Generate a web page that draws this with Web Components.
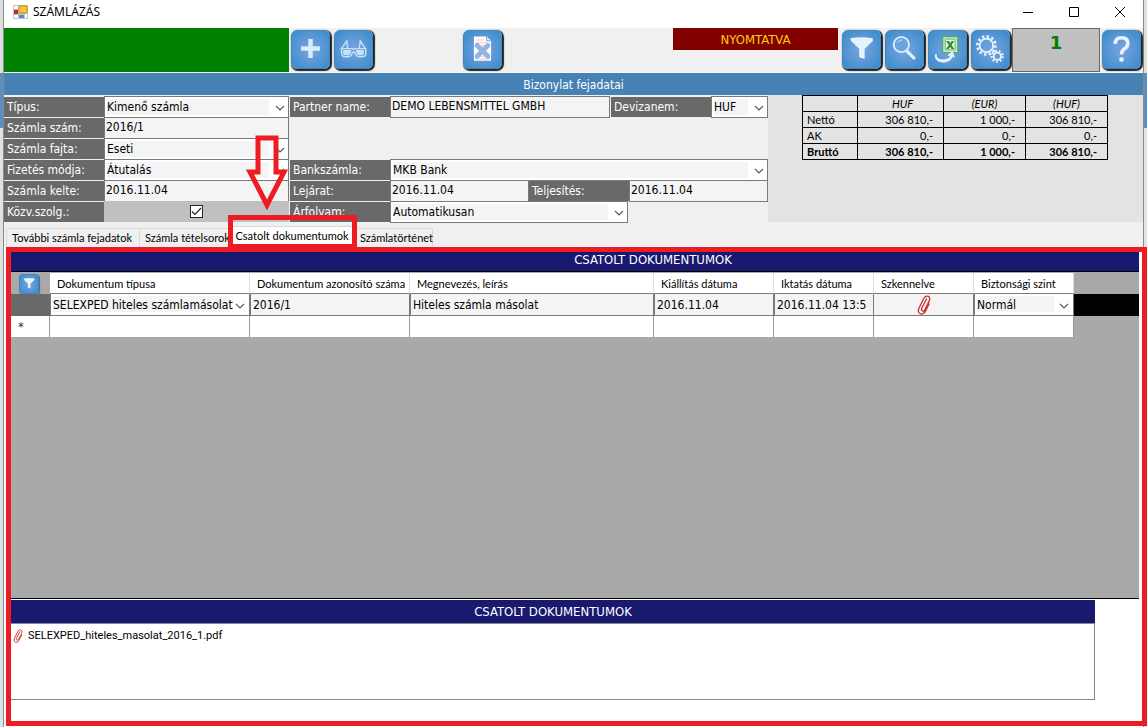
<!DOCTYPE html>
<html lang="hu">
<head>
<meta charset="utf-8">
<title>SZÁMLÁZÁS</title>
<style>
html,body{margin:0;height:100%}
body{font:12px/16px "DejaVu Sans Condensed","Noto Sans",sans-serif;color:#000;background:#ddd;overflow:hidden}
</style>
</head>
<body>
<invoice-app></invoice-app>
<script>
const ICONS = {
  plus: '<path d="M18 9h5v8h8v5h-8v8h-5v-8h-8v-5h8z" fill="#d8ecfb"/>',
  glasses: '<g fill="none" stroke="#c5e2f8" stroke-width="1.6"><path d="M7 20l6-9 1 8M34 20l-6-9-1 8M7 19.500h12q1.500 1.500 3 0h12v6q0 3-4 3h-3q-4 0-5-5h-2.500q-1 5-5 5h-3q-4 0-4-3z"/></g><path d="M9 21h9q0 5-3 6h-4q-2 0-2-2zM23 21h9v4q0 2-2 2h-4q-2-1-3-6z" fill="#c5e2f8"/>',
  cancelDoc: '<path d="M11 6h14l5 5v22H11z" fill="#fff"/><path d="M25 6v5h5" fill="#dbe8f5" stroke="#6aa3d8"/><path d="M13 10h9M13 13h13M13 28h15M13 31h15M13 16h15" stroke="#f0c4b4"/><path d="M14.500 16l12 12M26.500 16l-12 12" stroke="#94b4e2" stroke-width="5.500" stroke-linecap="round"/>',
  filter: '<path d="M8 8q12-2 25 0v3l-9 9v11l-6-2v-9l-9-9z" fill="#e6f3fd"/>',
  search: '<circle cx="17" cy="15" r="8.500" fill="#69a6de" stroke="#dceefc" stroke-width="2"/><path d="M13 13q1-3 5-3" stroke="#cfe6fa" fill="none"/><path d="M23 22l9 9" stroke="#e6f3fd" stroke-width="3.400"/>',
  excel: '<path d="M15 6h17v18H15z" fill="#c9e4e6" stroke="#4fae6d" stroke-width="1.600"/><path d="M18 9h11v12H18z" fill="#e8f6df" stroke="#5fb54c"/><path d="M19 11h3l1.500 2.500 1.500-2.500h3l-3 4.500 3 4.500h-3l-1.500-2.500-1.500 2.500h-3l3-4.500z" fill="#2d8a35"/><path d="M8 26q0 6 7 6 8 0 9-5h-3l5-4 2 6-2-1q-2 6-10 6.500Q6 34 7 26z" fill="#e6f3fd" stroke="#e6f3fd"/>',
  gears: '<circle cx="16" cy="16" r="7.500" fill="none" stroke="#e6f3fd" stroke-width="2"/><circle cx="16" cy="16" r="10" fill="none" stroke="#e6f3fd" stroke-width="3" stroke-dasharray="2.600 2.635"/><circle cx="28" cy="28" r="4" fill="none" stroke="#e6f3fd" stroke-width="2"/><circle cx="28" cy="28" r="6" fill="none" stroke="#e6f3fd" stroke-width="2.600" stroke-dasharray="2 2.188"/>',
  help: '<path d="M13.500 14.500q0-7 7-7t7 6q0 4-4 6.500-3 2-3 6" fill="none" stroke="#e6f3fd" stroke-width="4"/><rect x="18" y="29" width="5" height="5" rx="2" fill="#e6f3fd"/>'
};
const CHEVRON = '<svg class="chev" width="10" height="6" viewBox="0 0 10 6" aria-hidden="true"><path d="M1 1l4 4 4-4" fill="none" stroke="#555" stroke-width="1.100"/></svg>';
const CLIP = '<svg class="clip" viewBox="0 0 14 20" aria-hidden="true"><g fill="none" stroke="#c9302c" stroke-width="1.300" stroke-linecap="round"><path d="M9.500 4L4.600 13.500q-.6 2 1 2.500 1.500.4 2.400-1.400L12.500 5.400Q13.400 2 11 1.200 8.500.6 7 3L1.700 13.800Q.4 18 3.600 19q3 .6 4.600-2.400L12 9"/></g></svg>';

function define(name, render){
  customElements.define(name, class extends HTMLElement{
    constructor(){ super(); this.attachShadow({mode:'open'}); }
    connectedCallback(){ this.shadowRoot.innerHTML = render(this); }
  });
}

define('tool-button', el => {
  return `<style>
  :host{display:block;flex:none;width:39px;height:39px;margin-right:4px}
  button{display:block;width:100%;height:100%;padding:0;border:1px solid #3f86c4;border-radius:6px;background:radial-gradient(#6da0dc 20%,#3f8dcc 90%);box-shadow:1px 1px 1px 1px #222}
  svg{display:block;width:100%;height:100%}
  :host([small]){width:20px;height:20px;margin:0 0 0 8px}
  :host([small]) button{border-radius:3px;box-shadow:1px 1px 1px #567}
  </style><button type="button" aria-label="${el.getAttribute('label')}"><svg viewBox="0 0 41 41">${ICONS[el.getAttribute('icon')]}</svg></button>`;
});

define('title-bar', () => `<style>
  :host{display:flex;align-items:center;height:28px;background:#fff;padding:0 0 4px 9px;box-sizing:border-box}
  h1{margin:0;font:12px/16px "Noto Sans",sans-serif;flex:1}
  .app{margin-right:5px}
  button{width:46px;height:24px;padding:0;border:0;background:none;display:grid;place-items:center}
  .btns{display:flex}
  </style>
  <svg class="app" width="15" height="14" viewBox="0 0 15 14" aria-hidden="true"><path d="M0 0h15v14H0z" fill="#c4c4c4"/><path d="M1 1h4v3H1zM1 10h4v3H1zM12 9h2v4h-2z" fill="#fff"/><path d="M1 5h4v4H1z" fill="#c22"/><path d="M6 1h8v7H6z" fill="#f3c63c" stroke="#c98e17"/><path d="M6 10h5v3H6z" fill="#4e8de8"/></svg>
  <h1>SZÁMLÁZÁS</h1>
  <div class="btns">
  <button type="button" aria-label="Kis méret"><svg width="12" height="12"><path d="M1 6.500h10" stroke="#000"/></svg></button>
  <button type="button" aria-label="Teljes méret"><svg width="12" height="12"><path d="M1.500 1.500h9v9h-9z" fill="none" stroke="#000"/></svg></button>
  <button type="button" aria-label="Bezárás"><svg width="12" height="12"><path d="M1 1l10 10M11 1L1 11" stroke="#000"/></svg></button></div>`);

define('tool-bar', () => `<style>
  :host{display:flex;height:44px;background:#f0f0f0;border-bottom:1px solid #f8f8f8;align-items:flex-start}
  .green{width:285px;background:#008000;align-self:stretch;margin-right:2px}
  .icons{display:flex;padding-top:2px}
  .mid{margin-left:86px}
  .state{margin-left:auto;width:165px;height:22px;line-height:23px;background:#800000;color:#ffd000;text-align:center;margin-right:4px;font-size:13px}
  output{box-sizing:border-box;width:88px;height:44px;margin:0 2px 0 -2px;border:1px solid #696969;background:#c0c0c0;color:#008000;font:bold 18px/28px "DejaVu Sans",sans-serif;text-align:center}
  .last{margin-right:-2px}
  </style>
  <div class="green"></div>
  <div class="icons"><tool-button icon="plus" label="Új"></tool-button><tool-button icon="glasses" label="Megtekintés"></tool-button></div>
  <div class="icons mid"><tool-button icon="cancelDoc" label="Sztornó"></tool-button></div>
  <div class="state">NYOMTATVA</div>
  <div class="icons"><tool-button icon="filter" label="Szűrő"></tool-button><tool-button icon="search" label="Keresés"></tool-button><tool-button icon="excel" label="Excel export"></tool-button><tool-button icon="gears" label="Beállítások"></tool-button></div>
  <output>1</output>
  <div class="icons last"><tool-button icon="help" label="Súgó"></tool-button></div>`);

define('form-field', el => {
  const kind = el.getAttribute('kind') || 'text', value = el.getAttribute('value') || '';
  const control = {
    text: `<input id="c" type="text" value="${value}">`,
    select: `<select id="c"><option>${value}</option></select>${CHEVRON}`,
    check: `<input id="c" type="checkbox" checked><svg class="tick" width="11" height="9" viewBox="0 0 11 9" aria-hidden="true"><path d="M1 4.500l3 3L10 1" fill="none" stroke="#222" stroke-width="1.200"/></svg>`
  }[kind];
  return `<style>
  :host{display:flex;height:21px}
  label{flex:none;width:100px;box-sizing:border-box;margin-top:1px;padding-left:3px;background:#696969;color:#fff;line-height:21px;white-space:nowrap}
  .box{position:relative;flex:1;min-width:0;height:22px;display:flex}
  input,select{font:inherit;color:#000;border-radius:0;margin:0;box-sizing:border-box;width:100%;height:22px;border:1px solid #7a7a7a;appearance:none;outline:0}
  input{background:#f4f4f4;padding:0 1px 3px}
  select{background:linear-gradient(#f4f4f4,#f4f4f4) 2px 2px/calc(100% - 21px) 16px no-repeat #fff;padding:0 20px 1px 2px}
  .chev{position:absolute;right:4px;top:9px;pointer-events:none}
  .check{height:21px;background:#c0c0c0;align-items:center;justify-content:center}
  .check input{width:13px;height:13px;background:#fff;border-color:#222;padding:0}
  .tick{position:absolute;pointer-events:none}
  </style><label for="c">${el.getAttribute('label')}</label><div class="box ${kind}">${control}</div>`;
});

define('totals-table', () => `<style>
  :host{display:block}
  table{border-collapse:collapse;table-layout:fixed;width:306px;font:11px/15px Lato,sans-serif}
  th,td{border:1px solid #000;padding:0 10px 0 4px;height:15px;text-align:right;white-space:nowrap}
  thead th{font-weight:400;font-style:italic;text-align:center;padding:0 4px}
  thead th:nth-child(2){padding-left:8px}
  tbody th{text-align:left;font-weight:400;padding-right:0}
  tbody tr:last-child>*{font-weight:700}
  </style><table><colgroup><col style="width:55px"><col style="width:86px"><col style="width:82px"><col style="width:82px"></colgroup>
  <thead><tr><td></td><th>HUF</th><th>(EUR)</th><th>(HUF)</th></tr></thead>
  <tbody><tr><th>Nettó</th><td>306 810,-</td><td>1 000,-</td><td>306 810,-</td></tr>
  <tr><th>AK</th><td>0,-</td><td>0,-</td><td>0,-</td></tr>
  <tr><th>Bruttó</th><td>306 810,-</td><td>1 000,-</td><td>306 810,-</td></tr></tbody></table>`);

define('invoice-header', () => `<style>
  :host{display:block;background:#f0f0f0}
  h2{margin:0;height:22px;background:#4682b4;color:#fff;font:inherit;line-height:24px;text-align:center}
  .cols{display:flex;height:128px}
  form{display:flex;gap:1px;padding-top:1px;margin:0}
  .left{width:285px}.right{width:478px}
  .row{display:flex}
  .row>*{flex:1}
  .first{margin-bottom:42px;gap:1px}
  .first>:first-child{flex:none;width:320px}
  .rate{width:338px}
  .side{flex:1;background:#e3e3e3;padding-left:34px;height:127px}
  </style><h2>Bizonylat fejadatai</h2>
  <div class="cols"><form>
  <div class="left">
  <form-field label="Típus:" kind="select" value="Kimenő számla"></form-field>
  <form-field label="Számla szám:" value="2016/1"></form-field>
  <form-field label="Számla fajta:" kind="select" value="Eseti"></form-field>
  <form-field label="Fizetés módja:" kind="select" value="Átutalás"></form-field>
  <form-field label="Számla kelte:" value="2016.11.04"></form-field>
  <form-field label="Közv.szolg.:" kind="check"></form-field>
  </div>
  <div class="right">
  <div class="row first"><form-field label="Partner name:" value="DEMO LEBENSMITTEL GMBH"></form-field><form-field label="Devizanem:" kind="select" value="HUF"></form-field></div>
  <form-field label="Bankszámla:" kind="select" value="MKB Bank"></form-field>
  <div class="row"><form-field label="Lejárat:" value="2016.11.04"></form-field><form-field label="Teljesítés:" value="2016.11.04"></form-field></div>
  <form-field class="rate" label="Árfolyam:" kind="select" value="Automatikusan"></form-field>
  </div></form>
  <div class="side"><totals-table></totals-table></div></div>`);

define('tab-strip', () => `<style>
  :host{display:flex;align-items:flex-end;height:24px;background:#f0f0f0;padding-left:3px;font:11px/16px Lato,"Liberation Sans",sans-serif}
  button{font:inherit;color:#000;height:19px;padding:0 5px;border:1px solid #d9d9d9;border-bottom:0;background:#f0f0f0;white-space:nowrap;margin:0 0 0 -1px;overflow:visible;text-align:left}
  .a{width:134px}.b{width:91px}.d{width:79px}
  .sel{position:relative;z-index:3;width:126px;height:21px;background:#fff;padding:0 0 2px;text-align:center}
  .mark{position:absolute;box-sizing:border-box;left:-2px;right:-3px;top:-12px;height:34px;border:5px solid #ed1c24;pointer-events:none}
  .arrow{position:absolute;left:15px;top:-92px;pointer-events:none}
  </style><button class="a" type="button">További számla fejadatok</button><button class="b" type="button">Számla tételsorok</button><button class="sel" type="button">Csatolt dokumentumok<span class="mark"></span><svg class="arrow" width="46" height="80" viewBox="0 0 46 80" aria-hidden="true"><path d="M13 3h18v34h8L22 70 5 37h8z" fill="none" stroke="#ed1c24" stroke-width="5"/></svg></button><button class="d" type="button">Számlatörténet</button>`);

define('document-grid', () => `<style>
  :host{display:block;background:#a9a9a9;border-bottom:1px solid #000}
  table{border-collapse:separate;border-spacing:0;table-layout:fixed;width:100%}
  th{height:18px;padding:2px 7px 0;background:#fff;border-right:1px solid #ddd;border-bottom:1px solid #7a7a7a;text-align:left;font:11px/16px Lato,"Liberation Sans",sans-serif;white-space:nowrap}
  th:first-child,th:last-child{background:none;border:0;padding:0}
  td{height:21px;padding:0;background:#fff;border-right:1px solid #999;border-bottom:1px solid #a9a9a9;position:relative}
  .row td{border-bottom-color:#7a7a7a;border-right-color:#7a7a7a;background:#f4f4f4}
  td:last-child{background:none;border:0}
  .row td:first-child{background:#696969;border:0}
  .row td:last-child{background:#000}
  .new td:first-child{font-size:13px;line-height:21px;padding-left:7px;color:#333}
  input,select{display:block;font:inherit;color:#000;width:100%;height:21px;box-sizing:border-box;border:0;border-left:1px solid #7a7a7a;border-radius:0;margin:0;padding:0 2px;background:none;appearance:none;outline:0}
  select{background:linear-gradient(#f4f4f4,#f4f4f4) 2px 2px/calc(100% - 21px) 16px no-repeat #fff}
  .chev{position:absolute;right:4px;top:9px;pointer-events:none}
  .clip{display:block;width:14px;height:20px;margin:0 auto}
  </style><table>
  <colgroup><col style="width:39px"><col style="width:200px"><col style="width:160px"><col style="width:244px"><col style="width:120px"><col style="width:100px"><col style="width:100px"><col style="width:100px"><col></colgroup>
  <thead><tr><th><tool-button small icon="filter" label="Szűrő"></tool-button></th><th>Dokumentum típusa</th><th>Dokumentum azonosító száma</th><th>Megnevezés, leírás</th><th>Kiállítás dátuma</th><th>Iktatás dátuma</th><th>Szkennelve</th><th>Biztonsági szint</th><th></th></tr></thead>
  <tbody><tr class="row"><td></td><td><select aria-label="Dokumentum típusa"><option>SELEXPED hiteles számlamásolat</option></select>${CHEVRON}</td><td><input aria-label="Dokumentum azonosító száma" value="2016/1"></td><td><input aria-label="Megnevezés, leírás" value="Hiteles számla másolat"></td><td><input aria-label="Kiállítás dátuma" value="2016.11.04"></td><td><input aria-label="Iktatás dátuma" value="2016.11.04 13:5"></td><td>${CLIP}</td><td><select aria-label="Biztonsági szint"><option>Normál</option></select>${CHEVRON}</td><td></td></tr>
  <tr class="new"><td>*</td><td></td><td></td><td></td><td></td><td></td><td></td><td></td><td></td></tr></tbody></table>`);

define('documents-page', () => `<style>
  :host{position:relative;display:flex;flex-direction:column;background:#fff;padding:5px 4px 6px 7px;box-sizing:border-box}
  .frame{position:absolute;top:0;bottom:1px;left:2px;right:-4px;border:5px solid #ed1c24;z-index:2;pointer-events:none}
  h2{margin:0;background:#191970;color:#fff;font:inherit;font-size:13px;text-align:center}
  .top{height:19px;line-height:16px;border-bottom:1px solid #000;padding-left:156px}
  document-grid{flex:1;padding-top:1px}
  .files{margin:1px 44px 21px 0}
  .files h2{height:23px;line-height:24px}
  ul{list-style:none;margin:0;padding:4px 2px;height:67px;border:1px solid #828790;border-left:0;font:11px/16px Roboto,"Liberation Sans",sans-serif}
  a{display:flex;align-items:center;gap:5px;color:#000;text-decoration:none}
  .clip{width:10px;height:14px}
  </style><div class="frame"></div>
  <h2 class="top">CSATOLT DOKUMENTUMOK</h2>
  <document-grid></document-grid>
  <section class="files"><h2>CSATOLT DOKUMENTUMOK</h2><ul><li><a href="#file">${CLIP}SELEXPED_hiteles_masolat_2016_1.pdf</a></li></ul></section>`);

define('invoice-app', () => `<style>
  :host{display:flex;min-height:100vh}
  .edge{flex:none;width:3px;background:linear-gradient(#ddd 73px,#5b8fc4 73px,#5b8fc4 128px,#e2e2e2 128px)}
  main{flex:1;min-width:0;display:flex;flex-direction:column;border:solid #8a8a8a;border-width:0 1px;background:#f0f0f0}
  documents-page{flex:1}
  </style><div class="edge"></div><main><title-bar></title-bar><tool-bar></tool-bar><invoice-header></invoice-header><tab-strip></tab-strip><documents-page></documents-page></main><div class="edge"></div>`);
</script>
</body>
</html>
